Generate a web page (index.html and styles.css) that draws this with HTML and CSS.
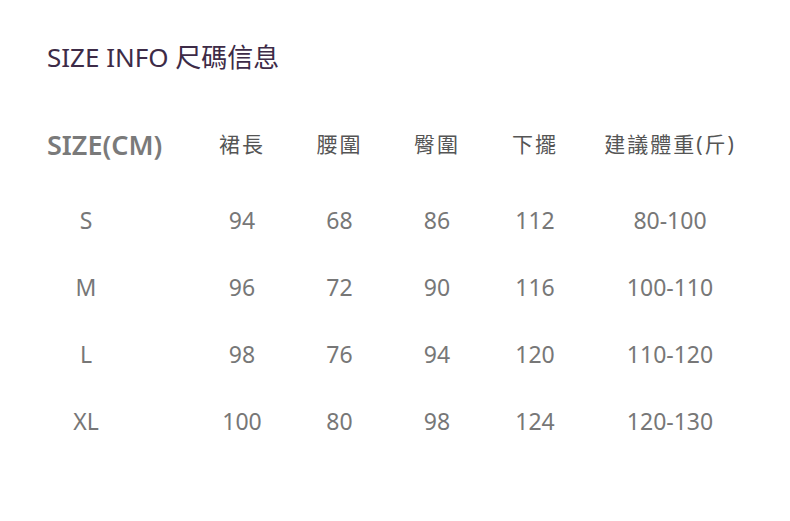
FILE: index.html
```html
<!DOCTYPE html>
<html lang="zh-Hant">
<head>
<meta charset="utf-8">
<link rel="stylesheet" href="styles.css">
</head>
<body>
<div class="page">
  <h1 class="title">SIZE INFO 尺碼信息</h1>
  <div class="table">
    <div class="cell head first">SIZE(CM)</div>
    <div class="cell head">裙長</div>
    <div class="cell head">腰圍</div>
    <div class="cell head">臀圍</div>
    <div class="cell head">下擺</div>
    <div class="cell head">建議體重(斤)</div>

    <div class="cell size">S</div>
    <div class="cell">94</div><div class="cell">68</div><div class="cell">86</div><div class="cell">112</div><div class="cell">80-100</div>

    <div class="cell size">M</div>
    <div class="cell">96</div><div class="cell">72</div><div class="cell">90</div><div class="cell">116</div><div class="cell">100-110</div>

    <div class="cell size">L</div>
    <div class="cell">98</div><div class="cell">76</div><div class="cell">94</div><div class="cell">120</div><div class="cell">110-120</div>

    <div class="cell size">XL</div>
    <div class="cell">100</div><div class="cell">80</div><div class="cell">98</div><div class="cell">124</div><div class="cell">120-130</div>
  </div>
</div>
</body>
</html>
```
FILE: styles.css
```css
html, body {
  margin: 0;
  padding: 0;
  background: #ffffff;
}
.page {
  padding: 42px 0 0 47px;
  font-family: "Noto Sans", "Noto Sans CJK TC", sans-serif;
}
.title {
  margin: 0;
  font-size: 26px;
  line-height: 30px;
  font-weight: 400;
  color: #3d2b47;
  white-space: nowrap;
}
.table {
  margin-top: 30px;
  display: grid;
  grid-template-columns: 146px 98px 97px 98px 98px 172px;
  grid-template-rows: 85px repeat(4, 67px);
  align-items: center;
  justify-items: center;
  color: #777777;
  font-size: 23px;
}
.cell {
  white-space: nowrap;
  line-height: 1;
}
.head {
  font-size: 21px;
  letter-spacing: 2px;
  color: #555555;
}
.head.first {
  justify-self: start;
  font-size: 27px;
  font-weight: 600;
  letter-spacing: 0;
  color: #7a7a7a;
}
.size {
  justify-self: start;
  width: 78px;
  text-align: center;
}
```
